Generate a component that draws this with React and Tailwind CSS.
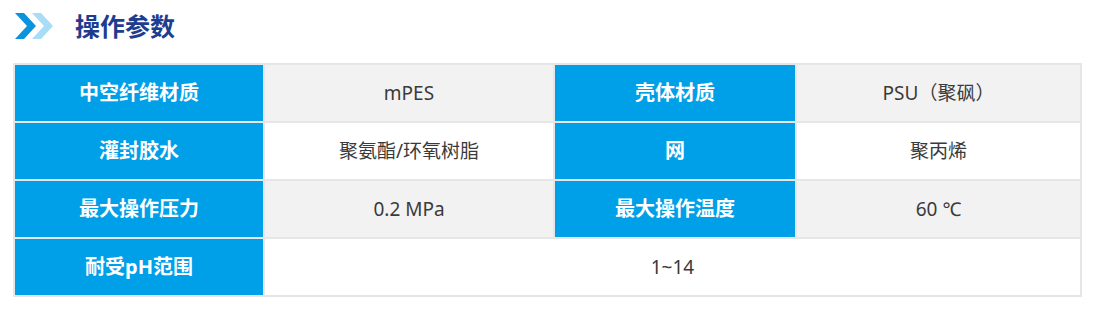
import React from "react";

const rows = [
  [["中空纤维材质", "mPES"], ["壳体材质", "PSU（聚砜）"]],
  [["灌封胶水", "聚氨酯/环氧树脂"], ["网", "聚丙烯"]],
  [["最大操作压力", "0.2 MPa"], ["最大操作温度", "60 ℃"]],
];

const Chevrons = () => (
  <svg width="40" height="26" viewBox="0 0 40 26">
    <polygon points="17,0 26,0 38,13 26,26 17,26 29,13" fill="#a9dcf5" />
    <polygon points="0,0 9,0 21,13 9,26 0,26 12,13" fill="#0b93dd" />
  </svg>
);

const App = () => {
  return (
    <div className="w-[1100px] h-[316px] bg-white pl-[13px] pt-[13px] font-['Noto_Sans','Noto_Sans_CJK_SC',sans-serif]">
      <div className="flex items-center h-[26px]">
        <div className="ml-[2px] flex">
          <Chevrons />
        </div>
        <h2 className="ml-[20px] text-[25px] font-bold leading-none text-[#1f3d8f]">操作参数</h2>
      </div>

      <div className="mt-[24px] grid w-[1069px] grid-cols-[248px_288px_240px_283px] auto-rows-[56px] gap-[2px] bg-[#e6e6e6] p-[2px]">
        {rows.map((row, i) => {
          const bg = i % 2 === 0 ? "bg-[#f2f2f2]" : "bg-white";
          return row.map(([label, value]) => (
            <React.Fragment key={label}>
              <div className="flex items-center justify-center bg-[#00a0e9] text-[20px] font-bold text-white">
                {label}
              </div>
              <div className={`flex items-center justify-center ${bg} text-[19px] text-[#3a3a3a]`}>
                {value}
              </div>
            </React.Fragment>
          ));
        })}
        <div className="flex items-center justify-center bg-[#00a0e9] text-[20px] font-bold text-white">
          耐受pH范围
        </div>
        <div className="col-span-3 flex items-center justify-center bg-white text-[19px] text-[#3a3a3a]">
          1~14
        </div>
      </div>
    </div>
  );
};

export default App;
